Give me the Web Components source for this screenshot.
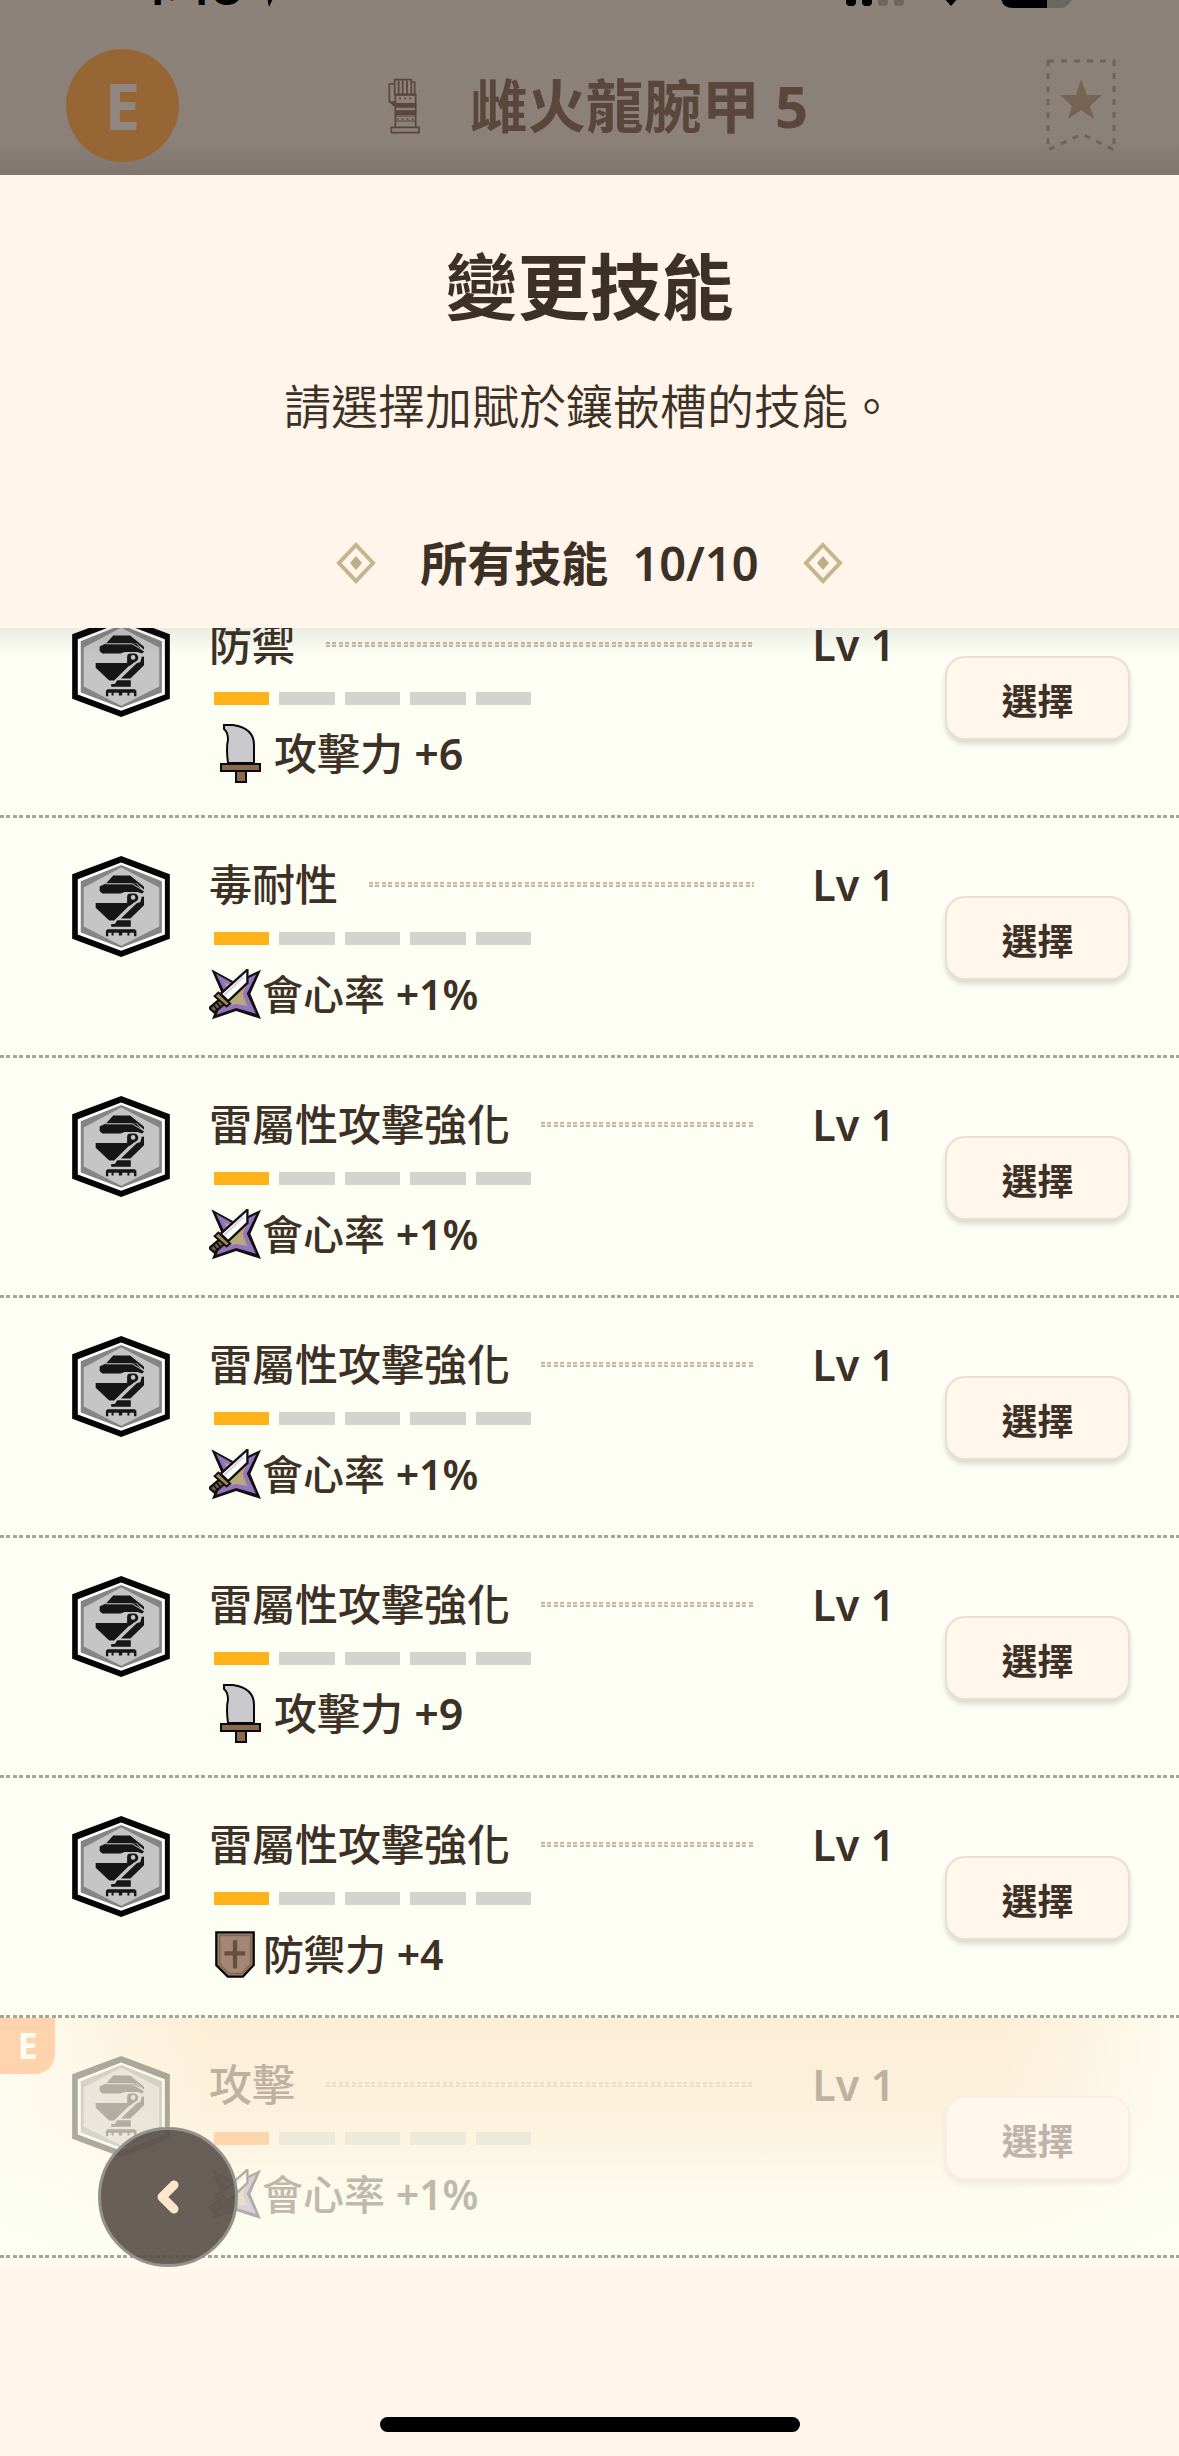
<!DOCTYPE html>
<html lang="zh-Hant">
<head>
<meta charset="utf-8">
<meta name="viewport" content="width=device-width, initial-scale=1">
<title>變更技能</title>
<style>
  :root {
    --ink: #3d3025;
    --cream: #fff5eb;
    --paper: #fdfff5;
    --dot: #a3a69b;
  }
  body {
    margin: 0;
    min-height: 100vh;
    display: flex;
    flex-direction: column;
    overflow: hidden;
    background: var(--cream);
    color: var(--ink);
    font-family: "Noto Sans", "Noto Sans CJK TC", sans-serif;
  }
</style>
</head>
<body>
<app-header>雌火龍腕甲 5</app-header>
<picker-heading>
  變更技能
  <span slot="hint">請選擇加賦於鑲嵌槽的技能。</span>
  <span slot="filter">所有技能</span>
  <span slot="count">10/10</span>
</picker-heading>
<skill-list>
  <skill-row level="1" stat="attack" bonus="+6">防禦<span slot="stat">攻擊力</span></skill-row>
  <skill-row level="1" stat="affinity" bonus="+1%">毒耐性<span slot="stat">會心率</span></skill-row>
  <skill-row level="1" stat="affinity" bonus="+1%">雷屬性攻擊強化<span slot="stat">會心率</span></skill-row>
  <skill-row level="1" stat="affinity" bonus="+1%">雷屬性攻擊強化<span slot="stat">會心率</span></skill-row>
  <skill-row level="1" stat="attack" bonus="+9">雷屬性攻擊強化<span slot="stat">攻擊力</span></skill-row>
  <skill-row level="1" stat="defense" bonus="+4">雷屬性攻擊強化<span slot="stat">防禦力</span></skill-row>
  <skill-row level="1" stat="affinity" bonus="+1%" equipped>攻擊<span slot="stat">會心率</span></skill-row>
</skill-list>
<home-indicator></home-indicator>
<back-button></back-button>

<script>
  const ICONS = {
    glove: `
      <svg width="32" height="56" viewBox="36 28 96 168" fill="none" stroke="#5b463b" stroke-width="5">
        <path d="M56 78V33H106V40H116V78M68 36V76M80 36V76M93 36V76M106 38V76"/>
        <path d="M54 46H40V98L56 112"/>
        <path d="M58 76V176M119 76V176"/>
        <path d="M56 78H121" stroke-width="7"/>
        <path d="M42 98H56V114Z" fill="#5b463b" stroke="none"/>
        <path d="M70 89h5M85 89h5M100 89h5M62 151h5M77 151h5M92 151h5M107 151h5"/>
        <path d="M57 110H121M57 132H121" stroke-width="14"/>
        <path d="M60 142H118M60 157H118" stroke-width="3"/>
        <path d="M46 176H129V192H46Z"/>
      </svg>`,
    bookmark: `
      <svg width="70" height="94" viewBox="0 0 70 94">
        <path d="M2 2H68V91L36 75L2 91Z" fill="none" stroke="#6f6459" stroke-width="3" stroke-dasharray="6 7"/>
        <path d="M35 20L41 36H56L44 47L48 60L35 51L22 60L26 47L14 36H30Z" fill="#786453"/>
      </svg>`,
    diamond: `
      <svg width="40" height="42" viewBox="0 0 40 42">
        <path d="M20 3L37 21L20 39L3 21Z" fill="none" stroke="#c5b68f" stroke-width="4"/>
        <path d="M20 14L26 21L20 28L14 21Z" fill="#bcad8b"/>
      </svg>`,
    skill: `
      <svg width="98" height="101" viewBox="95 45 295 305">
        <path d="M243 45L390 100V295L243 350L95 295V100Z" fill="#050505"/>
        <path d="M243 65L375 115V282L243 331L112 282V115Z" fill="#fff"/>
        <path d="M243 72L366 121V276L243 322L121 276V121Z" fill="#858585"/>
        <path d="M243 80L358 140V258L243 316L130 258V140Z" fill="#c5c5c5"/>
        <g fill="#161616">
          <path d="M219 104H270L312 138V147L290 127H198Z"/>
          <path d="M198 127H288L312 153L306 158L292 154H254L240 158H186L178 151V137Z"/>
          <path d="M196 129H276L312 150" fill="none" stroke="#c5c5c5" stroke-width="3"/>
          <path d="M166 187H270V192L222 240H207L166 201Z"/>
          <path d="M312 167V194L271 234H242L290 188L301 184L305 168Z"/>
          <path d="M231 239H272V259H213V250H224Z"/>
          <path d="M202 266H284L289 271V287H282V277H268V285H262V277H246V285H236V277H220V285H214V277H204V287H197V271Z"/>
          <path d="M260 187V166Q260 156 272 156H286Q297 160 296 172Q294 181 283 186L268 196Z"/>
        </g>
        <path d="M218 248L283 187Q297 183 297 171Q296 158 284 156H272Q259 156 259 167V185H168" fill="none" stroke="#c5c5c5" stroke-width="4"/>
        <circle cx="279" cy="170" r="7" fill="#c5c5c5"/>
      </svg>`,
    attack: `
      <svg width="43" height="60" viewBox="0 0 43 60" stroke="#0b0908" stroke-width="2">
        <path d="M5 1H14Q35 4 35 21V39H9Q7 24 9 16Q9 8 5 5Z" fill="#c9c8cc"/>
        <path d="M17 47H27V58H17Z" fill="#8b6a4c"/>
        <path d="M2 40H41V47H2Z" fill="#8b6a4c"/>
      </svg>`,
    affinity: `
      <svg width="53" height="51" viewBox="55 383 160 154">
        <path d="M62 384L134 423L212 385L180 458L212 534L137 510L64 535L94 458Z" fill="#111"/>
        <path d="M76 397L133 430L198 399L169 458L197 518L137 501L78 521L105 458Z" fill="#9275bd"/>
        <path d="M102 424L133 438L172 420L157 458L170 495L137 489L106 497L116 458Z" fill="#b9a976"/>
        <path d="M171 385V425L113 480L90 458Z" fill="#fff" stroke="#111" stroke-width="7"/>
        <path d="M159 407L100 463" stroke="#d8d6dd" stroke-width="6"/>
        <path d="M88 474L56 501L71 514L101 489Z" fill="#80614d" stroke="#111" stroke-width="7"/>
        <path d="M68 491L80 506M77 483L89 498" stroke="#111" stroke-width="5"/>
        <path d="M83 454L119 488L108 496L72 465Z" fill="#a98561" stroke="#111" stroke-width="6"/>
      </svg>`,
    defense: `
      <svg width="40" height="47" viewBox="44 89 122 143">
        <path d="M48 93H162V193L129 228H83L48 193Z" fill="#a38774" stroke="#080605" stroke-width="7"/>
        <path d="M58 102H153V190L125 219H87L58 190Z" fill="none" stroke="#816756" stroke-width="5"/>
        <path d="M105 117V203M73 157H136" stroke="#65503f" stroke-width="13"/>
      </svg>`,
    chevron: `
      <svg width="22" height="36" viewBox="0 0 22 36">
        <path d="M17 6L5 18L17 30" fill="none" stroke="#fde6ca" stroke-width="9" stroke-linecap="round" stroke-linejoin="round"/>
      </svg>`,
  };

  class GameIcon extends HTMLElement {
    constructor() {
      super();
      this.attachShadow({ mode: "open" });
    }
    connectedCallback() {
      this.shadowRoot.innerHTML = `
        <style>
          :host { display: block; flex: none; }
          svg { display: block; }
        </style>
        ${ICONS[this.getAttribute("name")]}
      `;
    }
  }

  class StatusBar extends HTMLElement {
    constructor() {
      super();
      this.attachShadow({ mode: "open" });
      this.shadowRoot.innerHTML = `
        <style>
          :host {
            display: flex;
            justify-content: space-between;
            align-items: flex-start;
            height: 56px;
            margin-top: -48px;
            padding: 0 107px 0 144px;
            color: #000;
          }
          .time {
            display: flex;
            align-items: flex-end;
            gap: 8px;
            font: 600 48px/72px Inter, sans-serif;
          }
          .time svg { margin-bottom: 16px; }
          .signal { margin-top: 14px; }
        </style>
        <div class="time">1:48
          <svg width="36" height="36" viewBox="0 0 36 36"><path d="M35 1L19 35L16 20L1 17Z"/></svg>
        </div>
        <svg class="signal" width="226" height="42" viewBox="0 0 226 42">
          <path d="M0 28q0-4 4-4h2q4 0 4 4v8q0 4-4 4h-2q-4 0-4-4Z"/>
          <path d="M16 20q0-4 4-4h2q4 0 4 4v16q0 4-4 4h-2q-4 0-4-4Z"/>
          <g fill="#6e665f">
            <path d="M32 12q0-4 4-4h2q4 0 4 4v24q0 4-4 4h-2q-4 0-4-4Z"/>
            <path d="M48 6q0-4 4-4h2q4 0 4 4v30q0 4-4 4h-2q-4 0-4-4Z"/>
            <rect x="155" y="4" width="71" height="38" rx="12" fill="#686861"/>
          </g>
          <path d="M97 31Q105 24 113 31L105 40Z"/>
          <path d="M201 4H167Q155 4 155 16V30Q155 42 167 42H201Z"/>
        </svg>
      `;
    }
  }

  class AppHeader extends HTMLElement {
    constructor() {
      super();
      this.attachShadow({ mode: "open" });
      this.shadowRoot.innerHTML = `
        <style>
          :host {
            display: block;
            background: linear-gradient(#8c8279 0, #8b8179 80%, #81766d 100%);
          }
          .bar {
            display: grid;
            grid-template-columns: 1fr auto 1fr;
            align-items: center;
            box-sizing: border-box;
            height: 167px;
            padding: 28px 63px 0 66px;
          }
          .equip {
            width: 113px;
            height: 113px;
            border-radius: 50%;
            background: #976635;
            color: #908783;
            font-size: 64px;
            font-weight: 700;
            line-height: 113px;
            text-align: center;
          }
          h1 {
            display: flex;
            align-items: center;
            gap: 50px;
            margin: 0;
            padding-left: 14px;
            color: #5b463b;
            font-size: 58px;
            font-weight: 700;
            line-height: 80px;
          }
          game-icon:last-child { justify-self: end; }
        </style>
        <status-bar></status-bar>
        <div class="bar">
          <div class="equip">E</div>
          <h1><game-icon name="glove"></game-icon><span><slot></slot></span></h1>
          <game-icon name="bookmark"></game-icon>
        </div>
      `;
    }
  }

  class PickerHeading extends HTMLElement {
    constructor() {
      super();
      this.attachShadow({ mode: "open" });
      this.shadowRoot.innerHTML = `
        <style>
          :host {
            display: block;
            padding: 61px 40px 33px;
            text-align: center;
          }
          h2 {
            margin: 0;
            font-size: 72px;
            font-weight: 700;
            line-height: 100px;
          }
          p {
            margin: 38px 0 0;
            font-size: 47px;
            font-weight: 350;
            line-height: 64px;
          }
          .filter {
            display: flex;
            justify-content: center;
            align-items: center;
            gap: 44px;
            margin-top: 93px;
            font-size: 47px;
            font-weight: 600;
            line-height: 64px;
          }
          .label { display: flex; gap: 24px; }
        </style>
        <h2><slot></slot></h2>
        <p><slot name="hint"></slot></p>
        <div class="filter">
          <game-icon name="diamond"></game-icon>
          <div class="label"><slot name="filter"></slot><slot name="count"></slot></div>
          <game-icon name="diamond"></game-icon>
        </div>
      `;
    }
  }

  class SkillList extends HTMLElement {
    constructor() {
      super();
      this.attachShadow({ mode: "open" });
      this.shadowRoot.innerHTML = `
        <style>
          :host {
            display: block;
            position: relative;
            overflow: hidden;
            background: var(--paper);
          }
          /* shade that the heading casts on the scrolled rows */
          :host::before {
            content: "";
            position: absolute;
            inset: 0 0 auto;
            height: 28px;
            background: linear-gradient(rgba(40, 50, 40, 0.09), transparent);
            z-index: 1;
          }
          .rows { margin-top: -50px; }
        </style>
        <div class="rows"><slot></slot></div>
      `;
    }
  }

  class SkillRow extends HTMLElement {
    constructor() {
      super();
      this.attachShadow({ mode: "open" });
    }
    connectedCallback() {
      const level = Number(this.getAttribute("level"));
      const stat = this.getAttribute("stat");
      const equipped = this.hasAttribute("equipped");
      const bars = [1, 2, 3, 4, 5]
        .map((n) => `<i ${n <= level ? 'class="on"' : ""}></i>`)
        .join("");
      this.shadowRoot.innerHTML = `
        <style>
          :host { display: block; position: relative; }
          :host([equipped]) {
            background:
              linear-gradient(90deg, rgba(253, 255, 245, 0.8) 0, transparent 18%, transparent 85%, rgba(253, 255, 245, 0.8) 100%),
              linear-gradient(#fdeed6 0, #fcf1dc 40%, #fdfaeb 70%, #fdfff2 96%);
          }
          .row {
            display: flex;
            align-items: flex-start;
            padding: 38px 49px 31px 72px;
          }
          .body {
            flex: 1;
            min-width: 0;
            margin: -3px 50px 0 39px;
            font-weight: 500;
          }
          .title {
            display: flex;
            align-items: center;
            font-size: 43px;
            line-height: 64px;
          }
          b { font-weight: 600; }
          .leader {
            flex: 1;
            height: 5px;
            margin: 0 58px 2px 31px;
            background:
              linear-gradient(var(--gap) 0 0) 0 2px / 100% 1px no-repeat,
              repeating-linear-gradient(90deg, #cbb79d 0 4px, transparent 4px 6px, #cbb79d 6px 10px, transparent 10px 13px);
            --gap: #f3efe2;
          }
          .bars {
            display: grid;
            grid-template-columns: repeat(5, 1fr);
            gap: 10px;
            width: 317px;
            height: 13px;
            margin: 15px 0 0 5px;
          }
          .bars i { background: #d2d4cd; }
          .bars .on { background: #ffb31a; }
          .stat {
            display: flex;
            align-items: center;
            height: 60px;
            margin-top: 19px;
            font-size: 41px;
            line-height: 60px;
          }
          .stat.attack { gap: 12px; padding-left: 10px; font-size: 43px; }
          .stat.defense { gap: 8px; padding-left: 6px; }
          button {
            flex: none;
            width: 185px;
            height: 84px;
            margin-top: 40px;
            padding: 0;
            border: 2px solid #e9dfd6;
            border-radius: 20px;
            background: #fff6ec;
            box-shadow: 0 4px 5px rgba(80, 70, 60, 0.2);
            color: var(--ink);
            font: inherit;
            font-size: 36px;
            font-weight: 600;
          }
          button span { display: block; padding-top: 3px; }
          :host([equipped]) .row > game-icon,
          :host([equipped]) .body { opacity: 0.32; }
          :host([equipped]) .on { background: #ff9a3c; }
          :host([equipped]) button {
            border-color: #f9eee3;
            box-shadow: 0 4px 5px rgba(80, 70, 60, 0.08);
            color: #beb4ab;
          }
          .badge {
            position: absolute;
            left: 0;
            top: 0;
            width: 55px;
            height: 56px;
            border-radius: 0 0 20px 0;
            background: #ffd3ad;
            color: #fffef2;
            font-size: 36px;
            font-weight: 700;
            line-height: 56px;
            text-align: center;
          }
          .rule {
            height: 3px;
            background: repeating-linear-gradient(90deg, var(--dot) 0 4px, transparent 4px 6px, var(--dot) 6px 10px, transparent 10px 13px);
          }
        </style>
        ${equipped ? '<div class="badge">E</div>' : ""}
        <div class="row">
          <game-icon name="skill"></game-icon>
          <div class="body">
            <div class="title"><span><slot></slot></span><div class="leader"></div><b>Lv ${level}</b></div>
            <div class="bars">${bars}</div>
            <div class="stat ${stat}">
              <game-icon name="${stat}"></game-icon>
              <span><slot name="stat"></slot> <b>${this.getAttribute("bonus")}</b></span>
            </div>
          </div>
          <button type="button" ${equipped ? "disabled" : ""}><span>選擇</span></button>
        </div>
        <div class="rule"></div>
      `;
    }
  }

  class HomeIndicator extends HTMLElement {
    constructor() {
      super();
      this.attachShadow({ mode: "open" });
      this.shadowRoot.innerHTML = `
        <style>
          :host {
            display: flex;
            flex: 1;
            justify-content: center;
            align-items: flex-end;
            padding-bottom: 24px;
            background: linear-gradient(#fefaf0, var(--cream) 16px);
          }
          div {
            width: 420px;
            height: 15px;
            border-radius: 8px;
            background: #000;
          }
        </style>
        <div></div>
      `;
    }
  }

  class BackButton extends HTMLElement {
    constructor() {
      super();
      this.attachShadow({ mode: "open" });
      this.shadowRoot.innerHTML = `
        <style>
          :host {
            display: block;
            position: fixed;
            left: 98px;
            bottom: 189px;
            z-index: 2;
          }
          button {
            display: grid;
            place-items: center;
            width: 140px;
            height: 140px;
            padding: 0;
            border: 3px solid #96918c;
            border-radius: 50%;
            background: rgba(88, 79, 72, 0.91);
          }
        </style>
        <button type="button" aria-label="返回"><game-icon name="chevron"></game-icon></button>
      `;
    }
  }

  customElements.define("game-icon", GameIcon);
  customElements.define("status-bar", StatusBar);
  customElements.define("app-header", AppHeader);
  customElements.define("picker-heading", PickerHeading);
  customElements.define("skill-list", SkillList);
  customElements.define("skill-row", SkillRow);
  customElements.define("home-indicator", HomeIndicator);
  customElements.define("back-button", BackButton);
</script>
</body>
</html>
